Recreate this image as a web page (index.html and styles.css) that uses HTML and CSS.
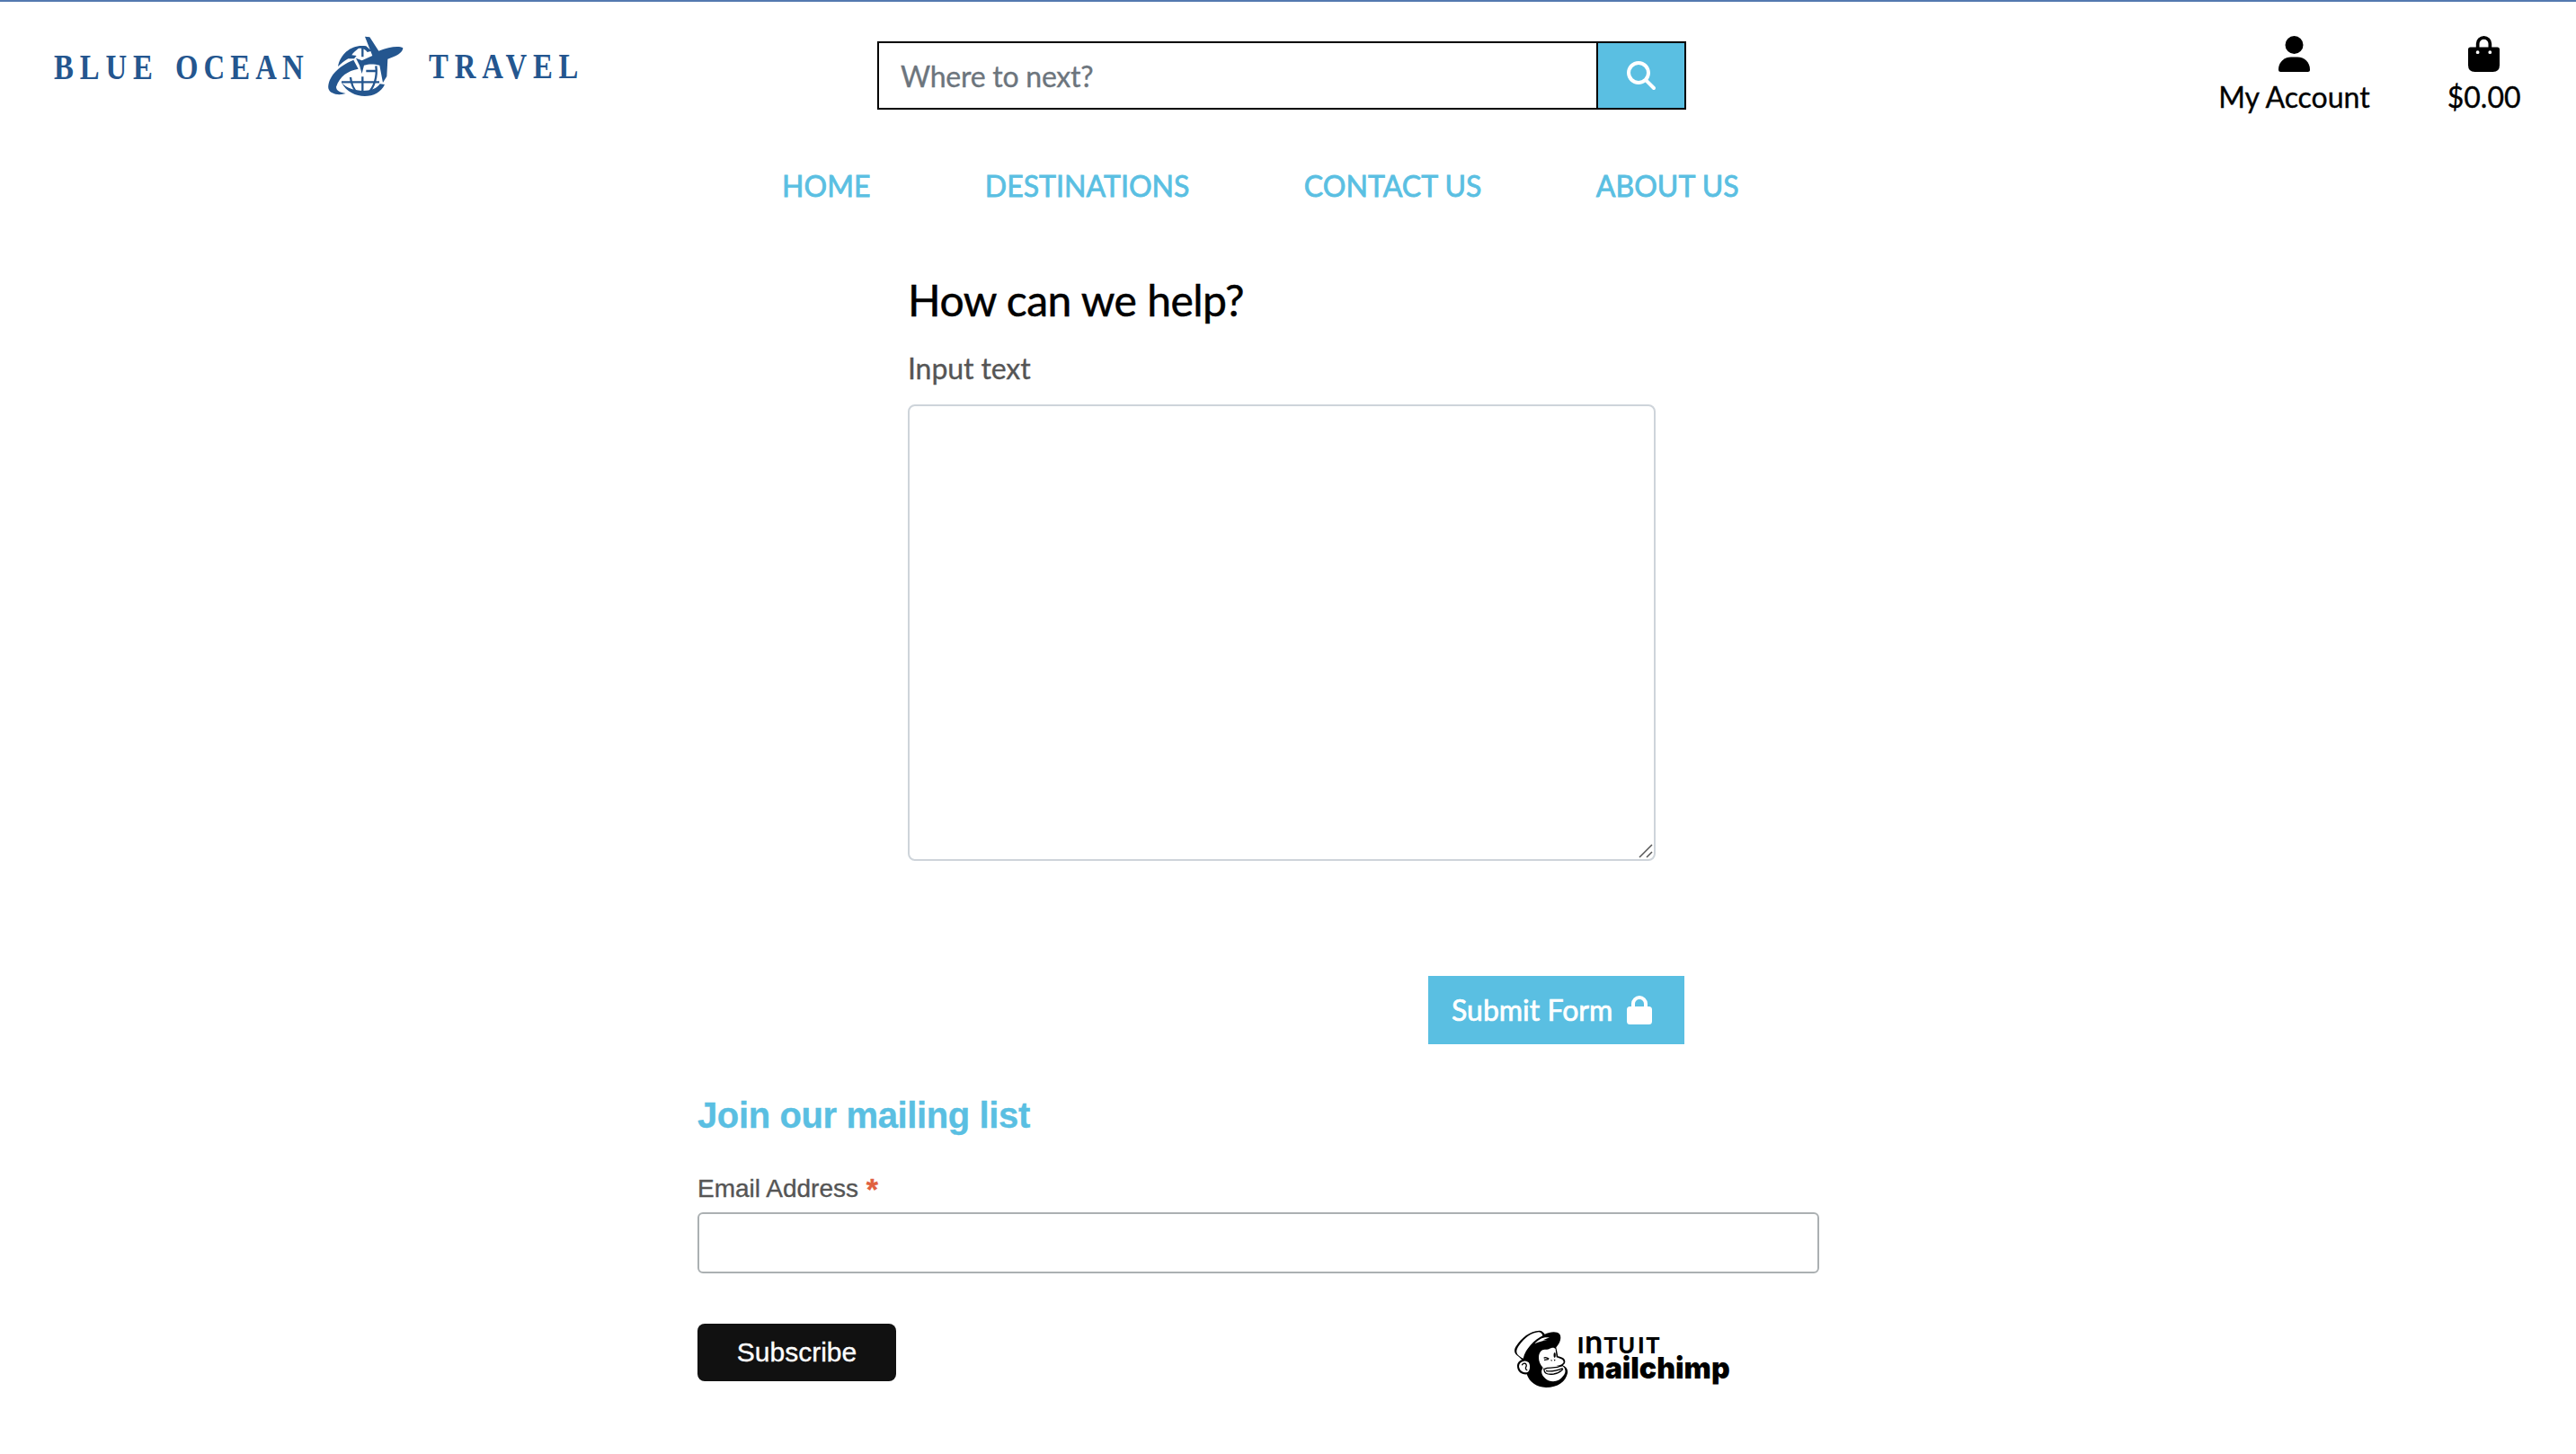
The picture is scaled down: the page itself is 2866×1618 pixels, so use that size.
FILE: index.html
```html
<!DOCTYPE html>
<html lang="en">
<head>
<meta charset="utf-8">
<title>Blue Ocean Travel</title>
<link rel="stylesheet" href="styles.css">
</head>
<body>
<header class="header">
  <a class="brand" aria-label="Blue Ocean Travel">
    <svg class="brand-logo" viewBox="0 0 600 90">
      <g class="brand-word">
        <text transform="translate(10 57.5) scale(.82 1)" textLength="134">BLUE</text>
        <text transform="translate(145 57.5) scale(.82 1)" textLength="174">OCEAN</text>
        <text transform="translate(427 57) scale(.82 1)" textLength="203">TRAVEL</text>
      </g>
      <g transform="translate(300 0) scale(.3333)">
        <path class="mark" d="M168 32L184 34L214 80C245 68 280 62 295 70C296 85 270 100 244 107L241 165L228 186L217 128C200 124 185 122 165 128L158 156L150 128L138 104L158 112L193 96Z"/>
        <path class="mark" d="M130 110L146 140C110 146 84 165 72 200C72 214 88 218 104 222C80 230 50 224 46 205C44 170 75 132 130 110Z"/>
        <path class="mark" d="M78 132C86 88 126 56 172 64L190 80L176 84C168 72 156 70 146 72C136 80 128 86 124 94L140 96L132 106L112 106C98 114 90 122 78 132Z"/>
        <path class="mark" d="M90 186C120 220 200 222 218 190L234 192C212 244 122 246 90 186Z"/>
        <path class="mark-line" d="M90 184H216M160 166V222M120 168C122 190 130 208 144 222M205 130C210 165 200 200 178 222M172 147H208M160 72V100"/>
      </g>
    </svg>
  </a>
  <form class="search">
    <input class="search-input" type="text" placeholder="Where to next?">
    <button class="search-button" type="button" aria-label="Search">
      <svg viewBox="0 0 512 512"><path d="M416 208c0 45.900-14.900 88.300-40 122.700L502.600 457.400c12.500 12.500 12.500 32.800 0 45.300s-32.800 12.500-45.300 0L330.700 376c-34.400 25.200-76.800 40-122.700 40C93.100 416 0 322.900 0 208S93.100 0 208 0S416 93.100 416 208zM208 352a144 144 0 1 0 0-288 144 144 0 1 0 0 288z"/></svg>
    </button>
  </form>
  <div class="tools">
    <a class="tool">
      <svg class="tool-icon" viewBox="0 0 35 40"><circle cx="17.500" cy="10" r="10"/><path d="M0 37.500C0 29.600 6 23.600 14 23.600H21C29 23.600 35 29.600 35 37.500Q35 40 32.500 40H2.500Q0 40 0 37.500Z"/></svg>
      <span>My Account</span>
    </a>
    <a class="tool">
      <svg class="tool-icon" viewBox="0 0 35 40"><path fill-rule="evenodd" d="M8.800 12.500V8.700a8.700 8.700 0 0 1 17.400 0V12.500H32.500Q35 12.500 35 15V32.500Q35 40 27.500 40H7.500Q0 40 0 32.500V15Q0 12.500 2.500 12.500ZM12.500 12.500H22.500V8.700a5 5 0 0 0-10 0ZM10.600 16.300a1.900 1.900 0 1 0 .01 3.800 1.900 1.900 0 0 0 0-3.800ZM24.300 16.300a1.900 1.900 0 1 0 .01 3.800 1.900 1.900 0 0 0 0-3.800Z"/></svg>
      <span>$0.00</span>
    </a>
  </div>
</header>
<nav class="nav">
  <a>HOME</a><a>DESTINATIONS</a><a>CONTACT US</a><a>ABOUT US</a>
</nav>
<main class="help">
  <h1 class="help-title">How can we help?</h1>
  <label class="help-label" for="message">Input text</label>
  <div class="message-box">
    <textarea class="message" id="message"></textarea>
    <svg class="grip" viewBox="0 0 16 16"><path d="M1 15L15 1M9 15L15 9"/></svg>
  </div>
  <button class="submit" type="button"><span>Submit Form</span>
    <svg viewBox="0 0 28 32"><path fill-rule="evenodd" d="M5 12V9a9 9 0 0 1 18 0V12H24.500Q28 12 28 15.500V28.500Q28 32 24.500 32H3.500Q0 32 0 28.500V15.500Q0 12 3.500 12ZM9 12H19V9a5 5 0 0 0-10 0Z"/></svg>
  </button>
</main>
<section class="mailing">
  <h2 class="mailing-title">Join our mailing list</h2>
  <label class="mailing-label" for="email">Email Address <span class="required">*</span></label>
  <input class="email" id="email" type="email">
  <div class="mailing-actions">
    <button class="subscribe" type="button">Subscribe</button>
    <svg class="mailchimp" viewBox="0 0 810 300" aria-label="Intuit Mailchimp">
      <path d="M60 150C44 140 40 128 52 112C66 88 98 62 128 62C136 62 142 68 146 74C162 66 186 62 196 74C204 88 194 108 184 118L190 148C202 150 214 154 214 166C214 172 210 176 206 178C218 184 224 192 222 204C216 232 190 252 150 252C118 250 96 236 86 208C68 210 54 198 54 180C54 170 62 162 70 160Z"/>
      <path class="paper" d="M62 148C48 138 50 126 60 112C78 86 104 68 126 67C134 68 138 74 139 79C112 92 82 122 74 155Q68 154 62 148Z"/>
      <path class="paper" d="M76 164C66 166 60 172 60 182C62 196 74 206 90 200C98 192 98 176 92 168Q84 162 76 164Z"/>
      <path class="paper" d="M132 132C140 122 152 128 160 124C170 118 178 118 182 124L185 151C196 155 208 157 209 167C206 176 194 178 184 180L206 181C217 190 217 204 207 214C194 234 166 238 148 222C134 210 132 198 140 186C124 168 122 146 132 132Z"/>
      <path class="paper" d="M112 106C126 90 140 82 162 85L140 94L154 93C140 97 128 98 112 106Z"/>
      <path class="face-line" d="M70 178C74 166 88 172 84 182C80 188 84 194 88 194M143 154C148 148 154 154 160 156M144 160L158 158M146 190C158 182 176 192 206 178M144 188C142 204 152 210 176 207C194 204 202 196 207 190M150 196C168 202 190 194 206 188"/>
      <ellipse cx="179" cy="144" rx="3.500" ry="9"/>
      <path d="M166 158l5 3-3 4zM176 158l6 1-3 5z"/>
      <text class="intuit" y="137"><tspan x="254">I</tspan><tspan class="arch" x="279">n</tspan><tspan x="343 391 456 484">TUIT</tspan></text>
      <text class="mc-word" x="256" y="222" textLength="508" lengthAdjust="spacingAndGlyphs">mailchimp</text>
    </svg>
  </div>
</section>
</body>
</html>
```
FILE: styles.css
```css
* { box-sizing: border-box; }
body {
  margin: 0;
  min-height: 1618px;
  border-top: 2px solid #5479b0;
  background: #fff;
  color: #000;
  font-family: Lato, sans-serif;
  font-size: 32px;
  line-height: 48px;
  -webkit-text-stroke: .35px;
}
input, textarea, button { font: inherit; }
svg { display: block; -webkit-text-stroke: 0; }
h1, h2 { margin: 0; }

.header {
  display: grid;
  grid-template-columns: 976px 900px 1fr;
  align-items: start;
  height: 168px;
  padding-top: 28px;
}
.brand { padding-left: 50px; }
.brand-logo { width: 600px; height: 90px; overflow: visible; }
.brand-word { fill: #24568f; font-family: "Liberation Serif", serif; font-size: 40px; font-weight: 700; }
.mark { fill: #24568f; }
.mark-line { fill: none; stroke: #24568f; stroke-width: 7; }

.search { display: flex; height: 76px; margin-top: 16px; border: 2px solid #000; }
.search-input { flex: 1; min-width: 0; padding: 2px 24px 0; border: 0; background: #fff; letter-spacing: -.25px; }
.search-input::placeholder { color: #6c757d; opacity: 1; }
.search-button { display: grid; place-items: center; width: 98px; padding: 0; border: 0; border-left: 2px solid #000; background: #5abfe2; }
.search-button svg { width: 32px; height: 32px; fill: #fff; }

.tools { display: flex; justify-content: flex-end; gap: 86px; padding: 10px 61.500px 0 0; }
.tool { display: grid; justify-items: center; row-gap: 4px; }
.tool-icon { width: 35px; height: 40px; }

.nav {
  display: flex;
  gap: 127.300px;
  height: 76px;
  padding: 13px 0 0 870px;
  color: #5abfe2;
  letter-spacing: .05px;
  -webkit-text-stroke: .8px;
}

.help { display: flex; flex-direction: column; width: 832px; margin: 59px 0 0 1010px; }
.help-title { font-size: 48px; font-weight: 400; line-height: 58px; letter-spacing: -.5px; -webkit-text-stroke: .5px; }
.help-label { margin-top: 23px; color: #555; letter-spacing: -.1px; }
.message-box { position: relative; height: 508px; margin-top: 16px; }
.message { display: block; width: 100%; height: 100%; border: 2px solid #ced4da; border-radius: 8px; resize: none; }
.grip { position: absolute; right: 3px; bottom: 3px; width: 16px; height: 16px; fill: none; stroke: #555; stroke-width: 1.5; }
.submit {
  display: flex;
  align-items: center;
  align-self: flex-end;
  gap: 16px;
  width: 285px;
  height: 76px;
  margin: 128px -32px 0 0;
  padding: 0 26px;
  border: 0;
  background: #5abfe2;
  color: #fff;
  -webkit-text-stroke: .7px;
}
.submit svg { width: 28px; height: 32px; fill: #fff; }

.mailing { display: flex; flex-direction: column; width: 1248px; margin: 50px 0 0 776px; font-family: "Liberation Sans", sans-serif; }
.mailing-title { color: #5abfe2; font-size: 40px; font-weight: 700; line-height: 58px; letter-spacing: -.38px; }
.mailing-label { margin-top: 33px; color: #555; font-size: 28px; line-height: 40px; }
.required { margin-left: 1px; color: #e0603f; font-size: 34px; font-weight: 700; line-height: 1; vertical-align: -3px; }
.email { height: 68px; margin-top: 6px; border: 2px solid #abb0b2; border-radius: 6px; }
.mailing-actions { display: flex; justify-content: space-between; margin-top: 56px; }
.subscribe { width: 221px; height: 64px; padding: 0; border: 0; border-radius: 8px; background: #111; color: #fff; font-size: 30px; }
.mailchimp { width: 270px; height: 100px; margin: -13px 84px 0 0; }
.paper { fill: #fff; }
.face-line { fill: none; stroke: #000; stroke-width: 4; }
.intuit { font-family: Lato, sans-serif; font-size: 76px; font-weight: 900; }
.arch { font-size: 108px; font-weight: 700; }
.mc-word { font-family: Inter, sans-serif; font-size: 100px; font-weight: 900; }
```
